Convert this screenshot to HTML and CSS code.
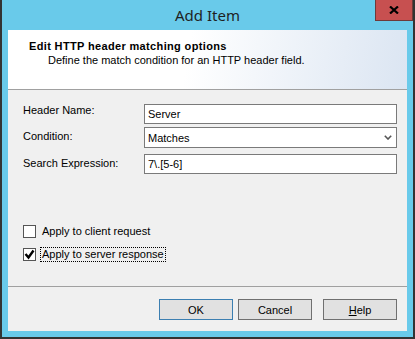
FILE: index.html
```html
<!DOCTYPE html>
<html lang="en">
<head>
    <meta charset="UTF-8">
    <title>Add Item</title>
    <link rel="stylesheet" href="styles.css">
</head>
<body>
    <div class="window">
        <div class="titlebar">
            <div class="title">Add Item</div>
            <button class="close" title="Close">
                <svg width="10" height="8" viewBox="0 0 10 8">
                    <path d="M1 0.5 L9 7.5 M9 0.5 L1 7.5" stroke="#000" stroke-width="2.2"/>
                </svg>
            </button>
        </div>

        <div class="client">
            <div class="banner">
                <div class="banner-title">Edit HTTP header matching options</div>
                <div class="banner-sub">Define the match condition for an HTTP header field.</div>
            </div>

            <div class="form">
                <div class="field">
                    <label for="header-name">Header Name:</label>
                    <input id="header-name" type="text" value="Server">
                </div>
                <div class="field field-condition">
                    <label for="condition">Condition:</label>
                    <div class="select">
                        <select id="condition">
                            <option>Matches</option>
                            <option>Does Not Match</option>
                        </select>
                        <svg class="chevron" width="8" height="5" viewBox="0 0 8 5">
                            <polyline points="0.8,0.8 4,4 7.2,0.8" fill="none" stroke="#555" stroke-width="1.6"/>
                        </svg>
                    </div>
                </div>
                <div class="field field-search">
                    <label for="search">Search Expression:</label>
                    <input id="search" type="text" value="7\.[5-6]">
                </div>

                <div class="checks">
                    <div class="check">
                        <span class="box"></span>
                        <span class="check-label">Apply to client request</span>
                    </div>
                    <div class="check">
                        <span class="box">
                            <svg width="11" height="11" viewBox="0 0 11 11">
                                <polyline points="1.5,5 4.5,8.5 9.5,1.5" fill="none" stroke="#000" stroke-width="2.4"/>
                            </svg>
                        </span>
                        <span class="check-label focused">Apply to server response</span>
                    </div>
                </div>
            </div>

            <div class="footer">
                <button class="btn btn-default">OK</button>
                <button class="btn btn-cancel">Cancel</button>
                <button class="btn btn-help"><u>H</u>elp</button>
            </div>
        </div>
    </div>
</body>
</html>
```

FILE: styles.css
```css
* { box-sizing: border-box; }
body {
    margin: 0;
    font-family: "Liberation Sans", Arial, sans-serif;
    font-size: 11px;
    color: #000;
}
.window {
    width: 415px;
    height: 339px;
    background: #69caea;
    border: 2px solid #333;
    border-top: 0;
    display: flex;
    flex-direction: column;
}
.titlebar {
    height: 30px;
    display: grid;
    grid-template-columns: 1fr auto 1fr;
    align-items: start;
}
.title {
    grid-column: 2;
    font-family: "Noto Sans", sans-serif;
    font-size: 15px;
    line-height: 30px;
    color: #1f1f1f;
}
.close {
    grid-column: 3;
    justify-self: end;
    width: 38px;
    height: 21px;
    padding: 0;
    background: #c75050;
    border: 1px solid #6e3a3a;
    border-top: 0;
    display: flex;
    align-items: center;
    justify-content: center;
}
.client {
    flex: 1;
    margin: 0 6px 6px;
    background: #f0f0f0;
    display: flex;
    flex-direction: column;
}
.banner {
    height: 60px;
    padding: 10px 0 0 21px;
    border-bottom: 1px solid #a0a0a0;
    background: linear-gradient(100deg, #fff 45%, #dbe5f2 100%);
    line-height: 13px;
}
.banner-title {
    font-weight: bold;
    letter-spacing: 0.35px;
}
.banner-sub {
    margin: 1px 0 0 19px;
}
.form {
    flex: 1;
    padding: 14px 10px 0 15px;
}
.field {
    display: flex;
    align-items: flex-start;
    height: 20px;
}
.field label {
    width: 121px;
    line-height: 13px;
}
.field-condition {
    margin-top: 3px;
    height: 21px;
}
.field-condition label,
.field-search label {
    margin-top: 3px;
}
.field-search {
    margin-top: 6px;
}
.field input,
.select select {
    width: 253px;
    height: 20px;
    border: 1px solid #7a7a7a;
    border-radius: 0;
    padding: 0 3px;
    background: #fff;
    font: inherit;
    color: #000;
    outline: none;
}
.select {
    position: relative;
    width: 253px;
}
.select select {
    height: 21px;
    appearance: none;
    -webkit-appearance: none;
}
.chevron {
    position: absolute;
    right: 5px;
    top: 8px;
}
.checks {
    margin-top: 51px;
}
.check {
    display: flex;
    align-items: flex-start;
    height: 13px;
    margin-bottom: 10px;
}
.box {
    width: 13px;
    height: 13px;
    border: 1px solid #555;
    background: #fff;
    display: flex;
    align-items: center;
    justify-content: center;
}
.check-label {
    margin: -1px 0 0 4px;
    padding: 0 1px;
    line-height: 13px;
    border: 1px solid transparent;
}
.check-label.focused {
    border: 1px dotted #000;
}
.footer {
    height: 45px;
    padding: 12px 10px 0 0;
    border-top: 1px solid #a0a0a0;
    display: flex;
    justify-content: flex-end;
    align-items: flex-start;
}
.btn {
    width: 74px;
    height: 21px;
    padding: 0;
    background: #e1e1e1;
    border: 1px solid #707070;
    font: inherit;
    color: #000;
}
.btn-default {
    border-color: #3c7fb1;
}
.btn-cancel {
    margin-left: 5px;
}
.btn-help {
    margin-left: 11px;
}
```
